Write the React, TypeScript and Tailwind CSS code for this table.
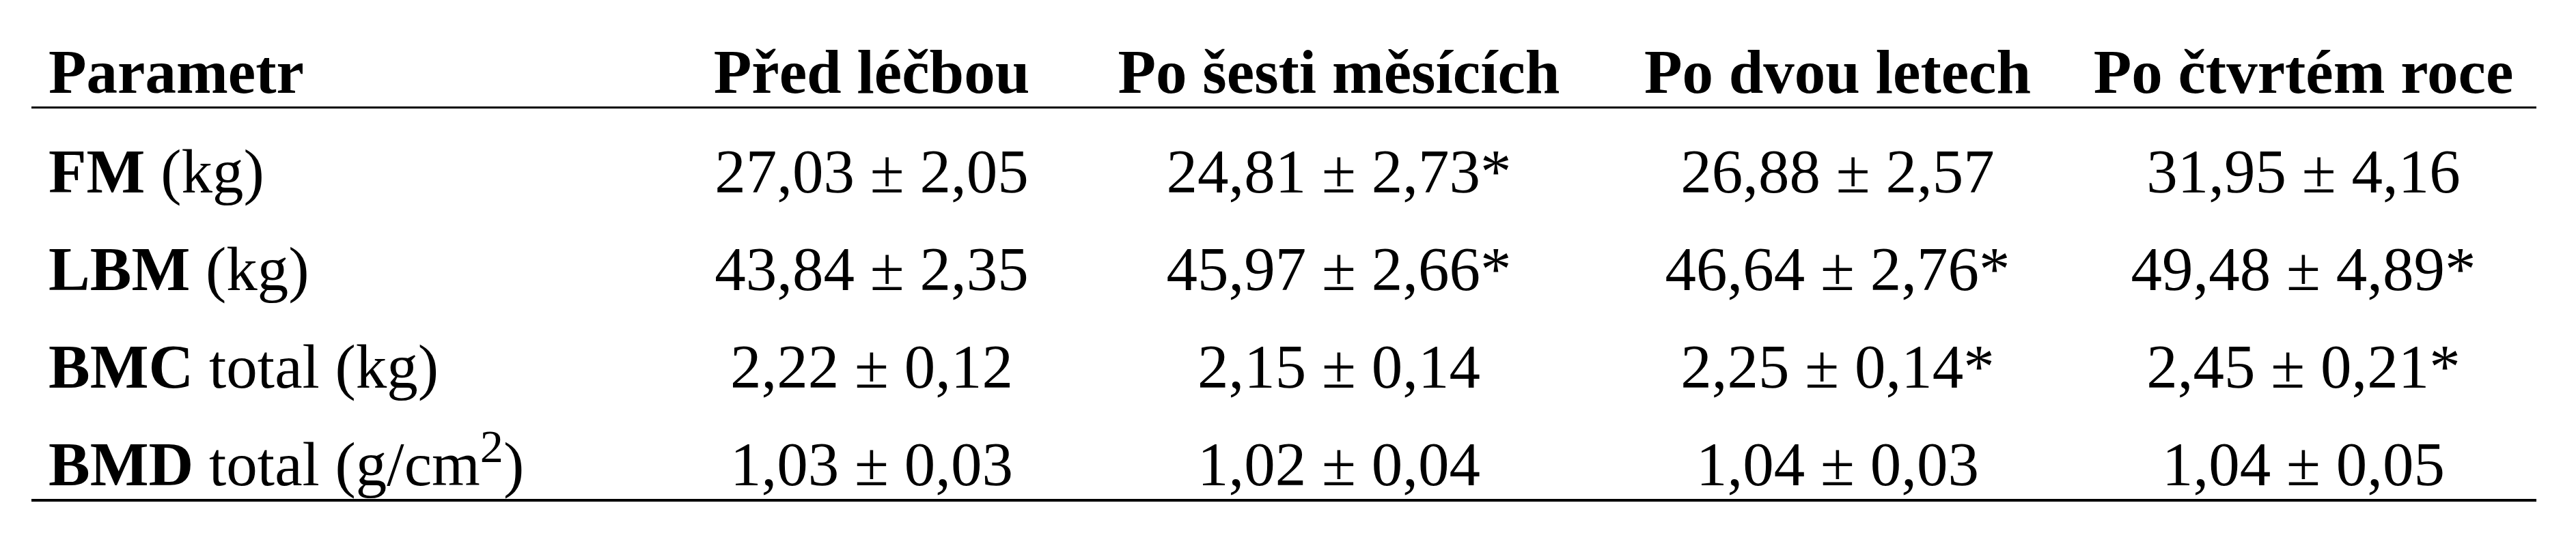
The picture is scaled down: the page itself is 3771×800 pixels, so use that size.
const headers = ["Před léčbou", "Po šesti měsících", "Po dvou letech", "Po čtvrtém roce"];

const rows: { label: string; unit: React.ReactNode; values: string[] }[] = [
  { label: "FM", unit: "(kg)", values: ["27,03 ± 2,05", "24,81 ± 2,73*", "26,88 ± 2,57", "31,95 ± 4,16"] },
  { label: "LBM", unit: "(kg)", values: ["43,84 ± 2,35", "45,97 ± 2,66*", "46,64 ± 2,76*", "49,48 ± 4,89*"] },
  { label: "BMC", unit: "total (kg)", values: ["2,22 ± 0,12", "2,15 ± 0,14", "2,25 ± 0,14*", "2,45 ± 0,21*"] },
  {
    label: "BMD",
    unit: (
      <>
        total (g/cm<sup>2</sup>)
      </>
    ),
    values: ["1,03 ± 0,03", "1,02 ± 0,04", "1,04 ± 0,03", "1,04 ± 0,05"],
  },
];

const cols = "grid grid-cols-[935px_590px_778px_682px_682px]";

export default function App() {
  return (
    <div className="w-[3771px] h-[800px] bg-white text-black font-['Liberation_Serif',serif] text-[91px] leading-[100px]">
      <div className="ml-[46px] w-[3667px]">
        {/* header */}
        <div className={`${cols} pt-[56px] border-b-[3px] border-black font-bold whitespace-nowrap`}>
          <div className="pl-[25px]">Parametr</div>
          {headers.map((h) => (
            <div key={h} className="text-center">
              {h}
            </div>
          ))}
        </div>

        {/* body */}
        <div className="border-b-[4px] border-black">
          {rows.map((r) => (
            <div key={r.label} className={`${cols} pt-[43px] whitespace-nowrap`}>
              <div className="pl-[25px]">
                <span className="font-bold">{r.label}</span> {r.unit}
              </div>
              {r.values.map((v, i) => (
                <div key={i} className="text-center">
                  {v}
                </div>
              ))}
            </div>
          ))}
        </div>
      </div>
    </div>
  );
}
